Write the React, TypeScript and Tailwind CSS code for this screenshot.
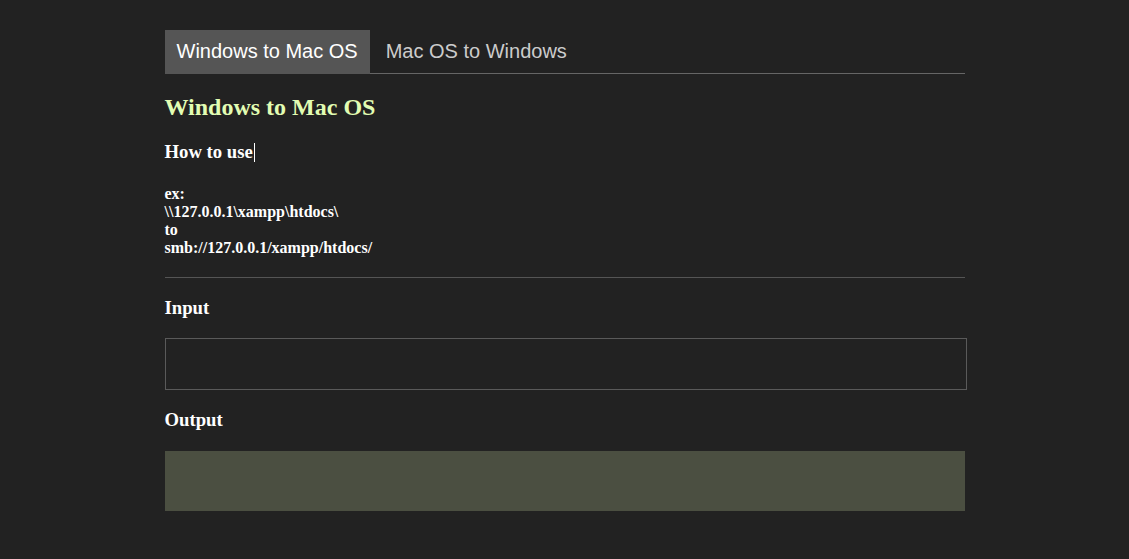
export default function App() {
  const serif = { fontFamily: '"Liberation Serif", "Times New Roman", serif' };
  return (
    <div className="min-h-[559px] w-full bg-[#222222]" style={serif}>
      <div className="mx-auto w-[800px] pt-[30px]">
        <div className="flex border-b border-[#666666]" style={{ fontFamily: '"Liberation Sans", Arial, sans-serif' }}>
          <div className="-mb-px bg-[#555555] pl-[12px] pr-[12px] py-[10px] text-[20px] leading-[23px] text-white">Windows to Mac OS</div>
          <div className="pl-[16px] pr-[12px] py-[10px] text-[20px] leading-[23px] text-[#cccccc]">Mac OS to Windows</div>
        </div>
        <h2 className="mt-[19px] text-[24px] font-bold leading-[28px] text-[#e2fdb3]">Windows to Mac OS</h2>
        <h3 className="mt-[20px] flex items-center text-[18.72px] font-bold leading-[22px] text-white">
          <span>How to use</span>
          <span className="ml-px inline-block h-[19px] w-px bg-white" />
        </h3>
        <div className="mt-[22px] text-[16px] font-bold leading-[18px] text-white">
          <div>ex:</div>
          <div>\\127.0.0.1\xampp\htdocs\</div>
          <div>to</div>
          <div>smb://127.0.0.1/xampp/htdocs/</div>
        </div>
        <div className="mt-[20px] h-px w-full bg-[#555555]" />
        <h3 className="mt-[19px] text-[18.72px] font-bold leading-[22px] text-white">Input</h3>
        <div className="mt-[19px] h-[52px] w-[802px] border border-[#5a5a5a] bg-[#222222]" />
        <h3 className="mt-[19px] text-[18.72px] font-bold leading-[22px] text-white">Output</h3>
        <div className="mt-[20px] h-[60px] w-full bg-[#4b4f41]" />
      </div>
    </div>
  );
}
